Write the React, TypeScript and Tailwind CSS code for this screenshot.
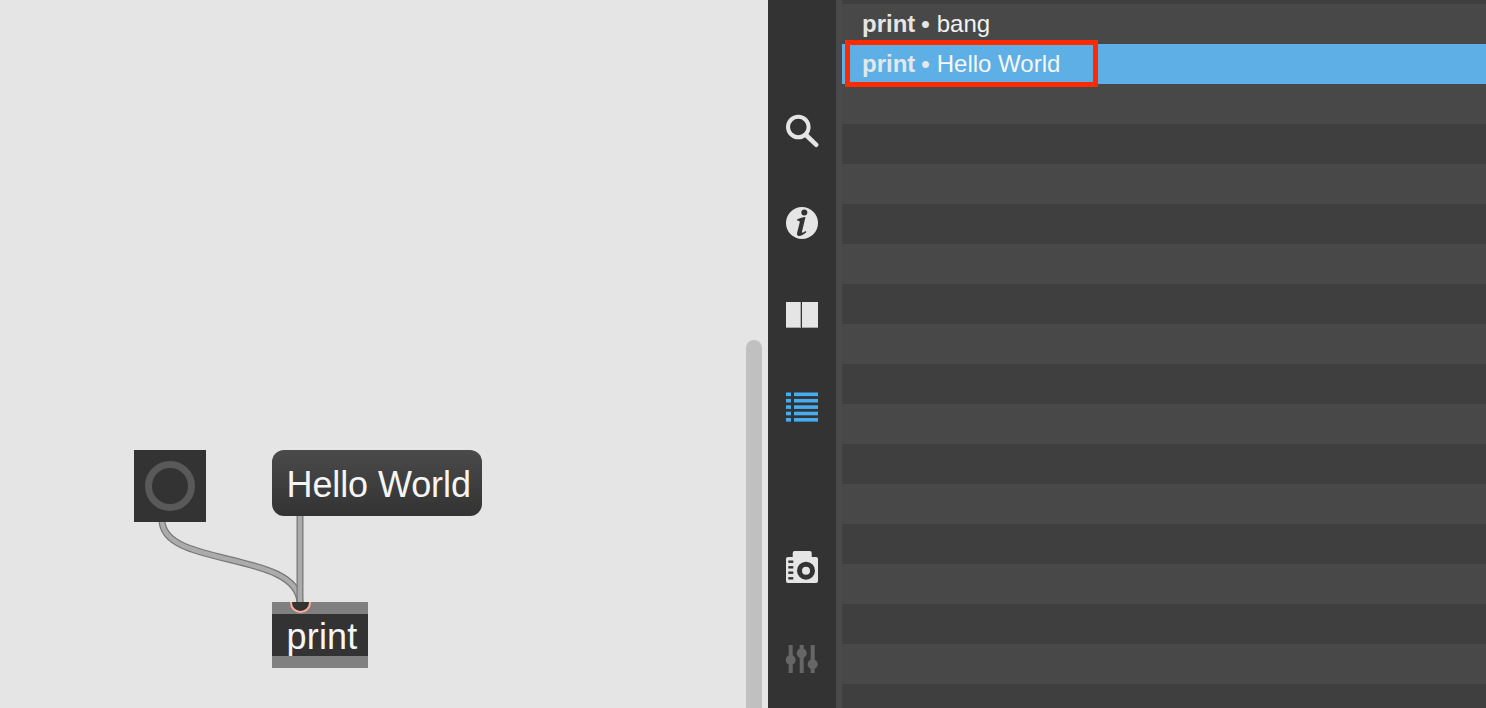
import { ReactNode } from "react";

const rowCount = 17;

function SearchIcon() {
  return (
    <svg width="36" height="36" viewBox="0 0 36 36" fill="none" stroke="#e5e5e5">
      <circle cx="14.3" cy="14" r="10.3" strokeWidth="4" />
      <path d="M22 22 L32.3 31.8" strokeWidth="4.5" strokeLinecap="round" />
    </svg>
  );
}

function InfoIcon() {
  return (
    <svg width="36" height="36" viewBox="0 0 36 36">
      <circle cx="18" cy="18" r="16" fill="#e5e5e5" />
      <circle cx="20.3" cy="7.6" r="3" fill="#333" />
      <path
        d="M13 14.5 C16 13 19 12 21.5 12 L18 26.5 C17.6 28 18.6 28.2 21.5 26 L22.5 27 C19.5 30 16.5 31.2 14.5 31 C13 30.6 12.8 29 13.2 27.5 L15.7 17.5 C16 16 15 15.5 13.3 15.7 Z"
        fill="#333"
      />
    </svg>
  );
}

function BookIcon() {
  return (
    <svg width="36" height="36" viewBox="0 0 36 36">
      <rect x="2" y="5" width="14.7" height="26" fill="#e5e5e5" />
      <rect x="18" y="5" width="16" height="26" fill="#e5e5e5" />
      <rect x="2" y="30" width="14.7" height="1" fill="#a8a8a8" />
      <rect x="18" y="30" width="16" height="1" fill="#a8a8a8" />
    </svg>
  );
}

function ListIcon() {
  const ys = [3.5, 9.9, 16.3, 22.7, 29];
  return (
    <svg width="36" height="36" viewBox="0 0 36 36" fill="#46aef0">
      {ys.map((y) => (
        <g key={y}>
          <rect x="2" y={y} width="5" height="3.6" />
          <rect x="10" y={y} width="24" height="3.6" />
        </g>
      ))}
    </svg>
  );
}

function CameraIcon() {
  return (
    <svg width="36" height="36" viewBox="0 0 36 36">
      <path
        d="M8.7 4 Q8.7 2 10.7 2 L25.7 2 Q27.7 2 27.7 4 L27.7 8 L32 8 Q34 8 34 10 L34 32 Q34 34 32 34 L4 34 Q2 34 2 32 L2 10 Q2 8 4 8 L8.7 8 Z"
        fill="#e5e5e5"
      />
      <circle cx="22" cy="21.7" r="6.5" fill="none" stroke="#333" strokeWidth="5" />
      {[12.7, 18.3, 23.7, 29.3].map((y) => (
        <rect key={y} x="4.3" y={y - 1.2} width="5" height="2.4" fill="#333" />
      ))}
    </svg>
  );
}

function MixerIcon() {
  return (
    <svg width="36" height="36" viewBox="0 0 36 36" fill="#666">
      <rect x="4.7" y="4" width="4" height="28" />
      <rect x="15.7" y="4" width="4" height="28" />
      <rect x="26.7" y="4" width="4" height="28" />
      <circle cx="6.7" cy="19" r="5" />
      <circle cx="17.7" cy="12.3" r="5" />
      <circle cx="28.7" cy="23.3" r="5" />
    </svg>
  );
}

function SideCell({ children }: { children: ReactNode }) {
  return <div className="flex h-[92px] flex-none items-center justify-center">{children}</div>;
}

function Canvas() {
  return (
    <div className="relative h-full w-[768px] flex-none bg-[#e5e5e5]">
      {/* patch cords go under the objects */}
      <svg className="absolute left-0 top-0" width="768" height="708" fill="none">
        <path d="M162 520 C162 568 298 550 300 603" stroke="#787878" strokeWidth="7" />
        <path d="M162 520 C162 568 298 550 300 603" stroke="#ababab" strokeWidth="4.5" />
        <path d="M300 514 L300 603" stroke="#787878" strokeWidth="7" />
        <path d="M300 514 L300 603" stroke="#ababab" strokeWidth="4.5" />
      </svg>

      <div className="absolute left-[134px] top-[450px] flex h-[72px] w-[72px] items-center justify-center bg-[#333333]">
        <div className="h-[50px] w-[50px] rounded-full border-[7px] border-[#595959]" />
      </div>

      <div className="absolute left-[272px] top-[450px] flex h-[66px] w-[210px] items-center rounded-xl bg-gradient-to-b from-[#4a4a4a] to-[#333333] pl-[14.5px] pt-[3px] font-['Liberation_Sans',sans-serif] text-[36px] leading-none text-[#f5f5f5]">
        <span className="tracking-[-0.1px]">Hello World</span>
      </div>

      <div className="absolute left-[272px] top-[602px] flex h-[66px] w-[96px] flex-col bg-[#808080]">
        <div className="mt-3 flex h-[42px] items-center overflow-hidden bg-[#333333] pl-[14.5px] pt-[4px] font-['Liberation_Sans',sans-serif] text-[36px] leading-none text-[#f5f5f5]">
          <span className="tracking-[0.2px]">print</span>
        </div>
      </div>

      {/* inlet, hanging off the top edge of print */}
      <div className="absolute left-[290px] top-[602px] h-[11px] w-[21px] overflow-hidden">
        <div className="absolute left-0 top-[-10px] h-[21px] w-[21px] rounded-full border-[2.5px] border-[#ffab99] bg-[#333333]" />
      </div>

      {/* scrollbar */}
      <div className="absolute left-[746px] top-[340px] h-[368px] w-4 rounded-t-lg bg-[#c0c0c0]" />
    </div>
  );
}

function Sidebar() {
  return (
    <div className="flex h-full w-[68px] flex-none flex-col overflow-hidden bg-[#333333] pt-[85px]">
      <SideCell><SearchIcon /></SideCell>
      <SideCell><InfoIcon /></SideCell>
      <SideCell><BookIcon /></SideCell>
      <SideCell><ListIcon /></SideCell>
      <div className="h-[68px] flex-none" />
      <SideCell><CameraIcon /></SideCell>
      <SideCell><MixerIcon /></SideCell>
    </div>
  );
}

function ConsoleRow({ index }: { index: number }) {
  const stripe = index % 2 === 0 ? "bg-[#484848]" : "bg-[#3f3f3f]";
  if (index === 0) {
    return (
      <div className={`flex h-10 items-center pl-5 text-[24px] text-[#f2f2f2] ${stripe}`}>
        <span className="font-bold text-[#e5e5e5]">print</span>
        <span className="ml-1.5 font-bold text-[#e5e5e5]">•</span>
        <span className="ml-[7px]">bang</span>
      </div>
    );
  }
  if (index === 1) {
    return (
      <div className="flex h-10 items-center bg-[#5dafe6] pl-5 text-[24px] text-[#f7f7f7]">
        <span className="font-bold text-[#e2e8ec]">print</span>
        <span className="ml-1.5 font-bold text-[#e2e8ec]">•</span>
        <span className="ml-[7px]">Hello World</span>
      </div>
    );
  }
  return <div className={`h-10 ${stripe}`} />;
}

function ConsoleList() {
  return (
    <div className="relative h-full min-w-0 flex-1 overflow-hidden bg-[#3f3f3f] pt-1 font-['Liberation_Sans',sans-serif] leading-none">
      {Array.from({ length: rowCount }, (_, i) => (
        <ConsoleRow key={i} index={i} />
      ))}
      {/* red annotation box */}
      <div className="absolute left-[3px] top-10 h-[47px] w-[253px] border-[5px] border-[#ff2a00]" />
    </div>
  );
}

export default function App() {
  return (
    <div className="flex h-[708px] w-[1486px] overflow-hidden">
      <Canvas />
      <Sidebar />
      <div className="h-full w-1.5 flex-none bg-[#4a4a4a]" />
      <ConsoleList />
    </div>
  );
}
